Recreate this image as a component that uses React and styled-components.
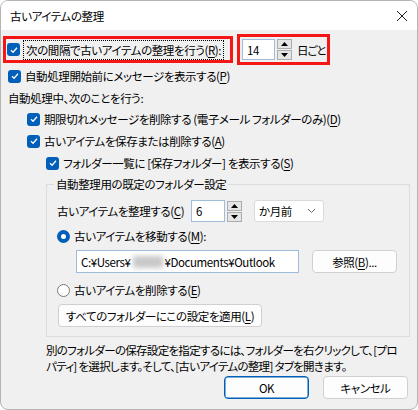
import React from "react";
import styled, { createGlobalStyle } from "styled-components";

const Global = createGlobalStyle`
  html, body { margin: 0; padding: 0; background: #ffffff; }
  body {
    font-family: "Noto Sans CJK JP", "Noto Sans", sans-serif;
    font-size: 11.5px;
    letter-spacing: -0.4px;
    color: #000;
    font-feature-settings: "palt";
    white-space: nowrap;
  }
`;

const Window = styled.div`
  width: 418px;
  height: 410px;
  box-sizing: border-box;
  border: 1px solid #b4b4b4;
  border-radius: 8px;
  overflow: hidden;
  background: #f0f0f0;
  display: flex;
  flex-direction: column;
`;

const TitleBar = styled.div`
  height: 29px;
  flex: none;
  background: #ffffff;
  display: flex;
  align-items: center;
  justify-content: space-between;
  padding: 0 9px 0 9px;
`;

const Title = styled.div`
  font-size: 11.5px;
`;

const Body = styled.div`
  padding: 4px 7px 0 7px;
  display: flex;
  flex-direction: column;
`;

const Row = styled.div`
  display: flex;
  align-items: center;
  height: ${(p) => p.h || 22}px;
  padding-left: ${(p) => p.indent || 0}px;
  margin-top: ${(p) => p.mt || 0}px;
`;

const RedBox = styled.div`
  display: flex;
  align-items: center;
  border: 3px solid #f51616;
  box-sizing: border-box;
  height: ${(p) => p.h}px;
  width: ${(p) => p.w}px;
  padding-left: ${(p) => p.pl || 0}px;
  margin-left: ${(p) => p.ml || 0}px;
  flex: none;
`;

const Box = styled.span`
  width: 13px;
  height: 13px;
  border-radius: 3px;
  background: #005fb8;
  display: inline-flex;
  align-items: center;
  justify-content: center;
  flex: none;
  margin-right: 4px;
`;

const Label = styled.span`
  white-space: nowrap;
  padding: ${(p) => (p.focus ? "1px 2px" : "0")};
  outline: ${(p) => (p.focus ? "1px dotted #000" : "none")};
`;

const U = styled.u`
  text-underline-offset: 2px;
`;

const Check = ({ children, focus }) => (
  <>
    <Box>
      <svg width="10" height="10" viewBox="0 0 10 10">
        <polyline points="2,5.2 4.1,7.2 8,2.8" fill="none" stroke="#fff" strokeWidth="1.3" />
      </svg>
    </Box>
    <Label focus={focus}>{children}</Label>
  </>
);

const RadioDot = styled.span`
  width: 13px;
  height: 13px;
  box-sizing: border-box;
  border-radius: 50%;
  flex: none;
  margin-right: 4px;
  background: #ffffff;
  border: ${(p) => (p.on ? "4px solid #005fb8" : "1px solid #7a7a7a")};
`;

const Edit = styled.div`
  width: ${(p) => p.w}px;
  height: ${(p) => p.h || 21}px;
  box-sizing: border-box;
  border: 1px solid #9fbcdc;
  background: #fff;
  display: flex;
  align-items: center;
  padding-left: 4px;
  overflow: hidden;
  flex: none;
`;

const Spin = styled.div`
  display: flex;
  flex-direction: column;
  gap: 1px;
  margin-left: 2px;
  flex: none;
`;

const SpinBtn = styled.div`
  width: 15px;
  height: 10px;
  box-sizing: border-box;
  border: 1px solid #acacac;
  background: #e5e5e5;
  display: flex;
  align-items: center;
  justify-content: center;
`;

const Spinner = () => (
  <Spin>
    <SpinBtn>
      <svg width="7" height="4" viewBox="0 0 7 4"><polygon points="0,4 7,4 3.5,0" fill="#000" /></svg>
    </SpinBtn>
    <SpinBtn>
      <svg width="7" height="4" viewBox="0 0 7 4"><polygon points="0,0 7,0 3.5,4" fill="#000" /></svg>
    </SpinBtn>
  </Spin>
);

const Select = styled.div`
  width: 70px;
  height: 22px;
  box-sizing: border-box;
  border: 1px solid #dadada;
  border-radius: 3px;
  background: #fff;
  display: flex;
  align-items: center;
  justify-content: space-between;
  padding: 0 7px 0 4px;
  margin-left: 12px;
  flex: none;
`;

const FieldLabel = styled.span`
  width: ${(p) => p.w}px;
  flex: none;
`;

const Unit = styled.span`
  margin-left: 5px;
  letter-spacing: -1.2px;
  flex: none;
`;

const Group = styled.fieldset`
  margin: 2px 0 0 38px;
  padding: 0 0 9px 10px;
  border: 1px solid #dcdcdc;
  border-radius: 0;
  min-width: 0;
`;

const Legend = styled.legend`
  padding: 0 2px;
  margin-left: -3px;
  line-height: 16px;
`;

const Button = styled.div`
  width: ${(p) => p.w}px;
  height: 23px;
  box-sizing: border-box;
  border: ${(p) => (p.primary ? "1px solid #005fb8" : "1px solid #d0d0d0")};
  box-shadow: ${(p) => (p.primary ? "inset 0 0 0 0.5px #005fb8" : "none")};
  border-radius: 4px;
  background: #fdfdfd;
  display: flex;
  align-items: center;
  justify-content: center;
  flex: none;
  margin-left: ${(p) => p.ml || 0}px;
`;

const Note = styled.div`
  margin: 5px 0 0 38px;
  line-height: 16px;
  letter-spacing: -0.7px;
`;

const Footer = styled.div`
  display: flex;
  justify-content: flex-end;
  gap: 14px;
  padding-right: 2px;
  margin-top: 2px;
`;

const Blur = styled.span`
  display: inline-block;
  width: 30px;
  height: 12px;
  background: #c8c8c8;
  filter: blur(2.5px);
  margin: 0 2px;
`;

export default function App() {
  return (
    <>
      <Global />
      <Window>
        <TitleBar>
          <Title>古いアイテムの整理</Title>
          <svg width="12" height="12" viewBox="0 0 12 12">
            <path d="M1 1 L11 11 M11 1 L1 11" stroke="#1a1a1a" strokeWidth="1" fill="none" />
          </svg>
        </TitleBar>
        <Body>
          <Row h={31}>
            <RedBox w={230} h={27} pl={1} ml={-5}>
              <Check focus>
                次の間隔で古いアイテムの整理を行う(<U>R</U>):
              </Check>
            </RedBox>
            <RedBox w={93} h={31} pl={2} ml={4}>
              <Edit w={33}>14</Edit>
              <Spinner />
              <Unit>日ごと</Unit>
            </RedBox>
          </Row>
          <Row>
            <Check>
              自動処理開始前にメッセージを表示する(<U>P</U>)
            </Check>
          </Row>
          <Row h={21}>自動処理中、次のことを行う:</Row>
          <Row indent={19}>
            <Check>
              期限切れメッセージを削除する (電子メール フォルダーのみ)(<U>D</U>)
            </Check>
          </Row>
          <Row indent={19}>
            <Check>
              古いアイテムを保存または削除する(<U>A</U>)
            </Check>
          </Row>
          <Row indent={38}>
            <Check>
              フォルダー一覧に [保存フォルダー] を表示する(<U>S</U>)
            </Check>
          </Row>
          <Group>
            <Legend>自動整理用の既定のフォルダー設定</Legend>
            <Row mt={8}>
              <FieldLabel w={134}>
                古いアイテムを整理する(<U>C</U>)
              </FieldLabel>
              <Edit w={34} h={22}>6</Edit>
              <Spinner />
              <Select>
                か月前
                <svg width="9" height="6" viewBox="0 0 9 6">
                  <polyline points="1,1 4.5,4.5 8,1" fill="none" stroke="#666" strokeWidth="1" />
                </svg>
              </Select>
            </Row>
            <Row mt={3}>
              <RadioDot on />
              古いアイテムを移動する(<U>M</U>):
            </Row>
            <Row h={23} mt={3} indent={19}>
              <Edit w={223} h={23}>
                C:¥Users¥<Blur />¥Documents¥Outlook
              </Edit>
              <Button w={85} ml={13}>
                参照(<U>B</U>)...
              </Button>
            </Row>
            <Row mt={6}>
              <RadioDot />
              古いアイテムを削除する(<U>E</U>)
            </Row>
            <Row h={23} mt={3} indent={1}>
              <Button w={204}>
                すべてのフォルダーにこの設定を適用(<U>L</U>)
              </Button>
            </Row>
          </Group>
          <Note>
            別のフォルダーの保存設定を指定するには、フォルダーを右クリックして、[プロ
            <br />
            パティ] を選択します。そして、[古いアイテムの整理] タブを開きます。
          </Note>
          <Footer>
            <Button w={85} primary>OK</Button>
            <Button w={85}>キャンセル</Button>
          </Footer>
        </Body>
      </Window>
    </>
  );
}
